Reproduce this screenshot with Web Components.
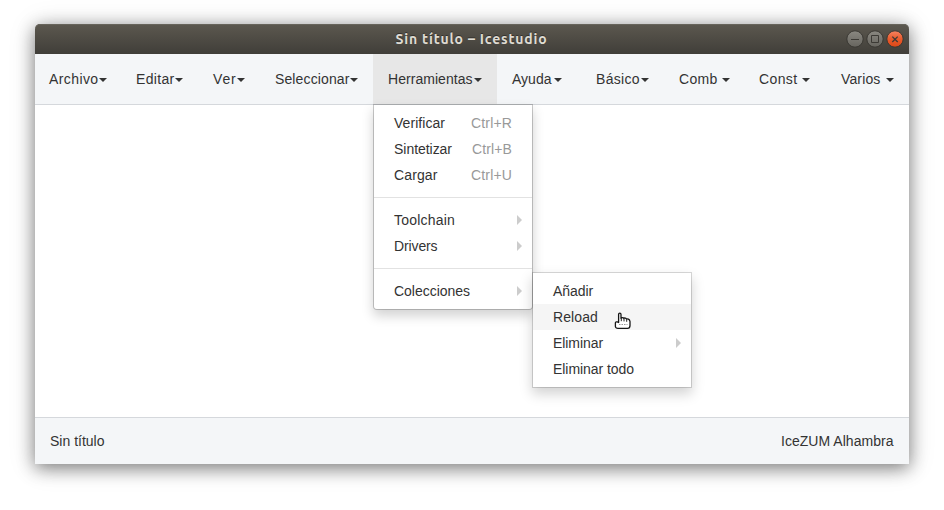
<!DOCTYPE html>
<html lang="es"><head><meta charset="utf-8"><title>Icestudio</title>
<style>
html,body{margin:0;width:944px;height:510px;overflow:hidden;background:#fff}
body{font:14px/20px "Liberation Sans",Arial,sans-serif;color:#333}
</style></head><body>
<ice-window>
  <ice-titlebar slot="title">Sin título – Icestudio</ice-titlebar>
  <ice-navbar slot="nav">
    <nav-item style="width:58px;padding:0 14px" w="49.5">Archivo</nav-item>
    <nav-item style="width:47px" w="38.5">Editar</nav-item>
    <nav-item style="width:32px" w="23.5">Ver</nav-item>
    <nav-item style="width:83px" w="74.5">Seleccionar</nav-item>
    <nav-item style="width:94px" w="84.5" active>Herramientas</nav-item>
    <nav-item style="width:50px" w="39.5">Ayuda</nav-item>
    <nav-item style="width:53px;margin-left:4px" w="44">Básico</nav-item>
    <nav-item style="width:51px" w="38.5">Comb</nav-item>
    <nav-item style="width:51px;margin-left:-1px" w="38.5">Const</nav-item>
    <nav-item style="width:53px;margin-left:1px" w="39.5">Varios</nav-item>
  </ice-navbar>
  <ice-menu slot="overlay" style="left:338px;top:80px" rounded>
    <menu-item w="51" key="Ctrl+R" kw="41">Verificar</menu-item>
    <menu-item w="58" key="Ctrl+B" kw="40">Sintetizar</menu-item>
    <menu-item w="43.5" key="Ctrl+U" kw="41">Cargar</menu-item>
    <menu-divider></menu-divider>
    <menu-item w="61" more>Toolchain</menu-item>
    <menu-item w="43.5" more>Drivers</menu-item>
    <menu-divider></menu-divider>
    <menu-item w="76" more>Colecciones</menu-item>
  </ice-menu>
  <ice-menu slot="overlay" style="left:497px;top:248px">
    <menu-item w="40">Añadir</menu-item>
    <menu-item w="45" hover>Reload</menu-item>
    <menu-item w="50" more>Eliminar</menu-item>
    <menu-item w="81">Eliminar todo</menu-item>
  </ice-menu>
  <hand-cursor slot="overlay" style="left:579px;top:288px"></hand-cursor>
  <ice-footer slot="footer"><fit-text w="54.5">Sin título</fit-text><fit-text w="112.5">IceZUM Alhambra</fit-text></ice-footer>
</ice-window>
<script>
const define = (name, html, init) => customElements.define(name, class extends HTMLElement {
  connectedCallback() {
    if (this.shadowRoot) return;
    this.attachShadow({mode: 'open'}).innerHTML = html;
    if (init) init(this, this.shadowRoot);
  }
});

/* Spreads its text to the advance width in the "w" attribute. */
define('fit-text', `<style>:host{display:block;white-space:nowrap}span{display:inline-block}</style><span></span>`, (el, root) => {
  const s = root.querySelector('span');
  s.textContent = el.textContent;
  const target = parseFloat(el.getAttribute('w'));
  if (target) s.style.letterSpacing = ((target - s.getBoundingClientRect().width) / s.textContent.length).toFixed(3) + 'px';
});

define('nav-item', `<style>
:host{display:flex;flex:none;align-items:center;justify-content:space-between;padding:0 15px;height:50px}
:host([active]){background:#e7e7e7}
i{width:0;height:0;border:4px solid transparent;border-top-color:#333;border-bottom:0;margin-top:2px}
</style><fit-text></fit-text><i></i>`, (el, root) => fill(root.querySelector('fit-text'), el.textContent, el.getAttribute('w')));

define('menu-item', `<style>
:host{display:flex;align-items:center;height:26px;padding:0 20px;justify-content:space-between}
:host([hover]){background:#f5f5f5}
.key{color:#999}
i{width:0;height:0;border:5px solid transparent;border-left-color:#ccc;border-right:0;margin-right:-10px}
</style><fit-text class="label"></fit-text>`, (el, root) => {
  fill(root.querySelector('.label'), el.textContent, el.getAttribute('w'));
  if (el.hasAttribute('key')) {
    const k = document.createElement('fit-text');
    k.className = 'key'; k.textContent = el.getAttribute('key'); k.setAttribute('w', el.getAttribute('kw'));
    root.append(k);
  }
  if (el.hasAttribute('more')) root.append(document.createElement('i'));
});

function fill(node, text, w) {
  const f = document.createElement('fit-text');
  f.className = node.className; f.textContent = text; f.setAttribute('w', w);
  node.replaceWith(f);
}

define('menu-divider', `<style>:host{display:block;height:1px;margin:9px 0;background:#e2e2e2}</style>`);

define('ice-menu', `<style>
:host{display:block;position:absolute;box-sizing:border-box;width:160px;padding:5px 0;background:#fff;background-clip:padding-box;border:1px solid rgba(0,0,0,.15);box-shadow:0 6px 12px rgba(0,0,0,.175)}
:host([rounded]){border-color:rgba(0,0,0,.2);border-radius:0 0 4px 4px}
</style><slot></slot>`);

define('ice-navbar', `<style>:host{display:flex;height:50px;background:#f4f6f8;border-bottom:1px solid #d5d8dc}</style><slot></slot>`);

define('ice-footer', `<style>:host{display:flex;height:46px;align-items:center;justify-content:space-between;padding:0 15.5px 0 15px;background:#f4f6f8;border-top:1px solid #d5d8dc}</style><slot></slot>`);

define('ice-titlebar', `<style>
:host{display:grid;grid-template-columns:1fr auto 1fr;align-items:center;height:30px;border-radius:5px 5px 0 0;background:linear-gradient(#5c584f,#403e39);box-shadow:inset 0 1px #67645b;color:#dfdbd2;font:bold 14px/20px Ubuntu,"Noto Sans",sans-serif;text-shadow:0 -1px #33312d}
fit-text{grid-column:2;margin-right:1px}
svg{grid-column:3;justify-self:end;display:block;margin-right:3px}
</style>
<fit-text></fit-text>
<svg width="60" height="20" viewBox="0 0 60 20">
<defs><linearGradient id="g" x2="0" y2="1"><stop stop-color="#8a8881"/><stop offset="1" stop-color="#66645e"/></linearGradient>
<linearGradient id="r" x2="0" y2="1"><stop stop-color="#f58462"/><stop offset=".5" stop-color="#e95a2c"/><stop offset="1" stop-color="#dc4716"/></linearGradient></defs>
<g stroke="#393732"><circle cx="9" cy="10" r="8.2" fill="url(#g)"/><circle cx="29" cy="10" r="8.2" fill="url(#g)"/><circle cx="49" cy="10" r="8.2" fill="url(#r)"/></g>
<g fill="none" stroke="#3c3a35"><path d="M5 10.5h8"/><path d="M25.5 6.5h7v7h-7z"/><path stroke-width="1.3" d="M46.3 7.6l5.4 5.4m0-5.4l-5.4 5.4"/></g></svg>`,
(el, root) => fill(root.querySelector('fit-text'), el.textContent, 152));

define('hand-cursor', `<style>:host{display:block;position:absolute;width:18px;height:18px}svg{display:block}</style>
<svg width="18" height="18" viewBox="0 0 18 18"><path d="M4.6 10.5V2.6C4.6 .7 7 .7 7 2.6V6.3C7.4 5.2 9.6 5.3 9.8 6.5C10.4 5.6 12.3 6 12.5 7.2C13.3 6.6 15.6 7 16 9.5V13.5Q16 16.4 13.5 16.4H4Q1.6 16.4 1.4 14.5V10.8Q1.6 9.6 3 9.9Q4.2 10.3 4.6 10.5Z" fill="#fff" stroke="#151515" stroke-width="1.3" stroke-linejoin="round"/><path d="M7.3 6v3.2M10 6.8v2.6M12.7 7.4v2.4" stroke="#222"/><path d="M5 12.5h8.5" stroke="#999" stroke-dasharray="1.5 1"/></svg>`);

define('ice-window', `<style>
:host{display:flex;flex-direction:column;position:relative;width:874px;height:440px;margin:24px 35px;border-radius:5px 5px 0 0;background:#fff;box-shadow:0 4px 17px rgba(0,0,0,.45),0 2px 28px rgba(0,0,0,.15)}
main{flex:1}
</style><slot name="title"></slot><slot name="nav"></slot><main></main><slot name="footer"></slot><slot name="overlay"></slot>`);
</script></body></html>
